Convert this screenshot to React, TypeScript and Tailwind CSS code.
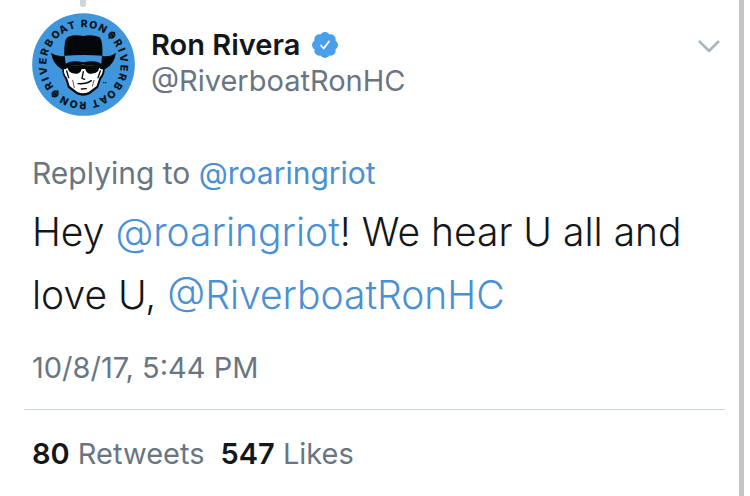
// Angle (in degrees, clockwise from the top) of every letter on the badge ring
const ringLetters = [
  { char: "R", angle: -122 },
  { char: "I", angle: -111 },
  { char: "V", angle: -99 },
  { char: "E", angle: -85 },
  { char: "R", angle: -72 },
  { char: "B", angle: -58 },
  { char: "O", angle: -43 },
  { char: "A", angle: -30 },
  { char: "T", angle: -17 },
  { char: "R", angle: 1 },
  { char: "O", angle: 14 },
  { char: "N", angle: 28 },
];

const Avatar = () => (
  <svg viewBox="36 38 309 309" className="size-full" role="img" aria-label="Ron Rivera">
    <circle cx="190.5" cy="192.5" r="154" fill="#3f96dc" />
    {[0, 180].map((turn) => (
      <g key={turn} transform={`rotate(${turn} 190.5 192.5)`} fill="#0b1118">
        <g fontFamily="Inter, sans-serif" fontWeight="800" fontSize="31" textAnchor="middle">
          {ringLetters.map(({ char, angle }) => (
            <text key={angle} x="190.5" y="81" transform={`rotate(${angle} 190.5 192.5)`}>
              {char}
            </text>
          ))}
        </g>
        {/* Dollar mark between the names */}
        <g transform="rotate(44 190.5 192.5)">
          <ellipse cx="190.5" cy="70" rx="10" ry="11" />
          <path d="M190.5 57 V84" stroke="#0b1118" strokeWidth="4" />
          <path d="M186 66 H197 M184 74 H195" stroke="#3f96dc" strokeWidth="1.5" />
        </g>
      </g>
    ))}
    {/* Face */}
    <path d="M127 190 Q124 222 136 236 L144 262 L170 282 Q190 290 209 282 L234 262 L243 236 Q257 222 254 190 Z" fill="#05080b" />
    <path d="M132 200 Q129 222 141 232 L149 257 L172 275 Q190 283 206 275 L230 257 L238 232 Q251 220 248 200 L230 192 Q190 180 148 192 Z" fill="#fff" />
    <path d="M140 212 L146 232 M241 212 L234 232" stroke="#05080b" strokeWidth="4" strokeLinecap="round" />
    <path d="M158 240 L163 262 M222 240 L217 258" stroke="#05080b" strokeWidth="2" strokeLinecap="round" />
    {/* Hat */}
    <path d="M133 167 Q131 114 145 109 Q165 102 190 107 Q218 102 237 110 Q249 116 247 167 Q272 170 288 157 Q284 190 256 206 L243 207 Q236 194 190 193 Q144 194 137 207 L124 206 Q98 190 93 158 Q112 170 133 167 Z" fill="#05080b" />
    <path d="M134 166 Q190 162 246 166 L244 190 Q224 178 190 186 Q156 178 137 190 Z" fill="#3f96dc" />
    {/* Glasses */}
    <path d="M140 198 L147 213 Q155 222 172 220 Q182 218 185 206 L196 206 Q198 217 208 220 Q226 222 234 213 L240 198 Q190 190 140 198 Z" fill="#05080b" />
    <path d="M190 214 L186 234 L194 237 M174 250 Q198 252 214 241 M184 266 L199 265" fill="none" stroke="#05080b" strokeWidth="4" strokeLinecap="round" />
    <path d="M249 247 H260" stroke="#0b1118" strokeWidth="3" strokeDasharray="4 2" />
  </svg>
);

const VerifiedBadge = () => (
  <svg viewBox="0 0 26 26" className="size-[26px]" role="img" aria-label="Verified account">
    <g fill="#4a9eeb">
      <circle cx="13" cy="13" r="11" />
      {[0, 45, 90, 135, 180, 225, 270, 315].map((angle) => (
        <circle key={angle} cx="13" cy="5" r="5" transform={`rotate(${angle} 13 13)`} />
      ))}
    </g>
    <path d="M9 13.5 L11.7 16.5 L17 9.5" fill="none" stroke="#fff" strokeWidth="1.8" strokeLinecap="round" strokeLinejoin="round" />
  </svg>
);

const stats = [
  { count: "80", label: "Retweets" },
  { count: "547", label: "Likes" },
];

const App = () => {
  return (
    <div className="flex min-h-screen bg-white font-[Inter,sans-serif] text-[#14171a]">
      <article className="flex-1 pl-8 pr-[14px]">
        <div className="ml-12 h-[7px] w-[6px] rounded-b-full bg-[#ccd6dd]" />
        <header className="flex items-start pt-[6px]">
          <div className="size-[103px] shrink-0">
            <Avatar />
          </div>
          <div className="ml-4 flex-1 pt-[14px]">
            <div className="flex items-center gap-3">
              <h1 className="text-[29px] leading-9 font-semibold">Ron Rivera</h1>
              <VerifiedBadge />
            </div>
            <a href="#profile" className="block text-[29px] leading-9 text-[#697682]">@RiverboatRonHC</a>
          </div>
          <button type="button" aria-label="More options" className="mt-[26px] mr-1 text-[#aab4bc]">
            <svg viewBox="0 0 24 14" className="h-[14px] w-6" fill="none" stroke="currentColor" strokeWidth="2.6">
              <path d="M2 2 L12 12 L22 2" />
            </svg>
          </button>
        </header>

        <p className="mt-[39px] text-[30px] leading-9 text-[#697682]">
          Replying to <a href="#roaringriot" className="text-[#4a90d2]">@roaringriot</a>
        </p>
        <p className="mt-[9px] text-[39px] leading-[63px] font-light">
          Hey <a href="#roaringriot" className="text-[#4a90d2]">@roaringriot</a>! We hear U all and love U,{" "}
          <a href="#profile" className="text-[#4a90d2]">@RiverboatRonHC</a>
        </p>
        <time dateTime="2017-10-08T17:44" className="mt-6 block text-[29px] leading-9 text-[#697682]">
          10/8/17, 5:44 PM
        </time>

        <div className="-ml-2 mt-[23px] border-t border-[#ccd6dd] pl-2">
          <div className="flex gap-4 pt-[26px] text-[29px] leading-9">
            {stats.map((stat) => (
              <a key={stat.label} href="#stats" className="text-[#697682]">
                <span className="font-semibold text-[#14171a]">{stat.count}</span> {stat.label}
              </a>
            ))}
          </div>
        </div>
      </article>
      <div className="mr-[6px] w-[5px] bg-[#c4c4c4]" />
    </div>
  );
};

export default App;
